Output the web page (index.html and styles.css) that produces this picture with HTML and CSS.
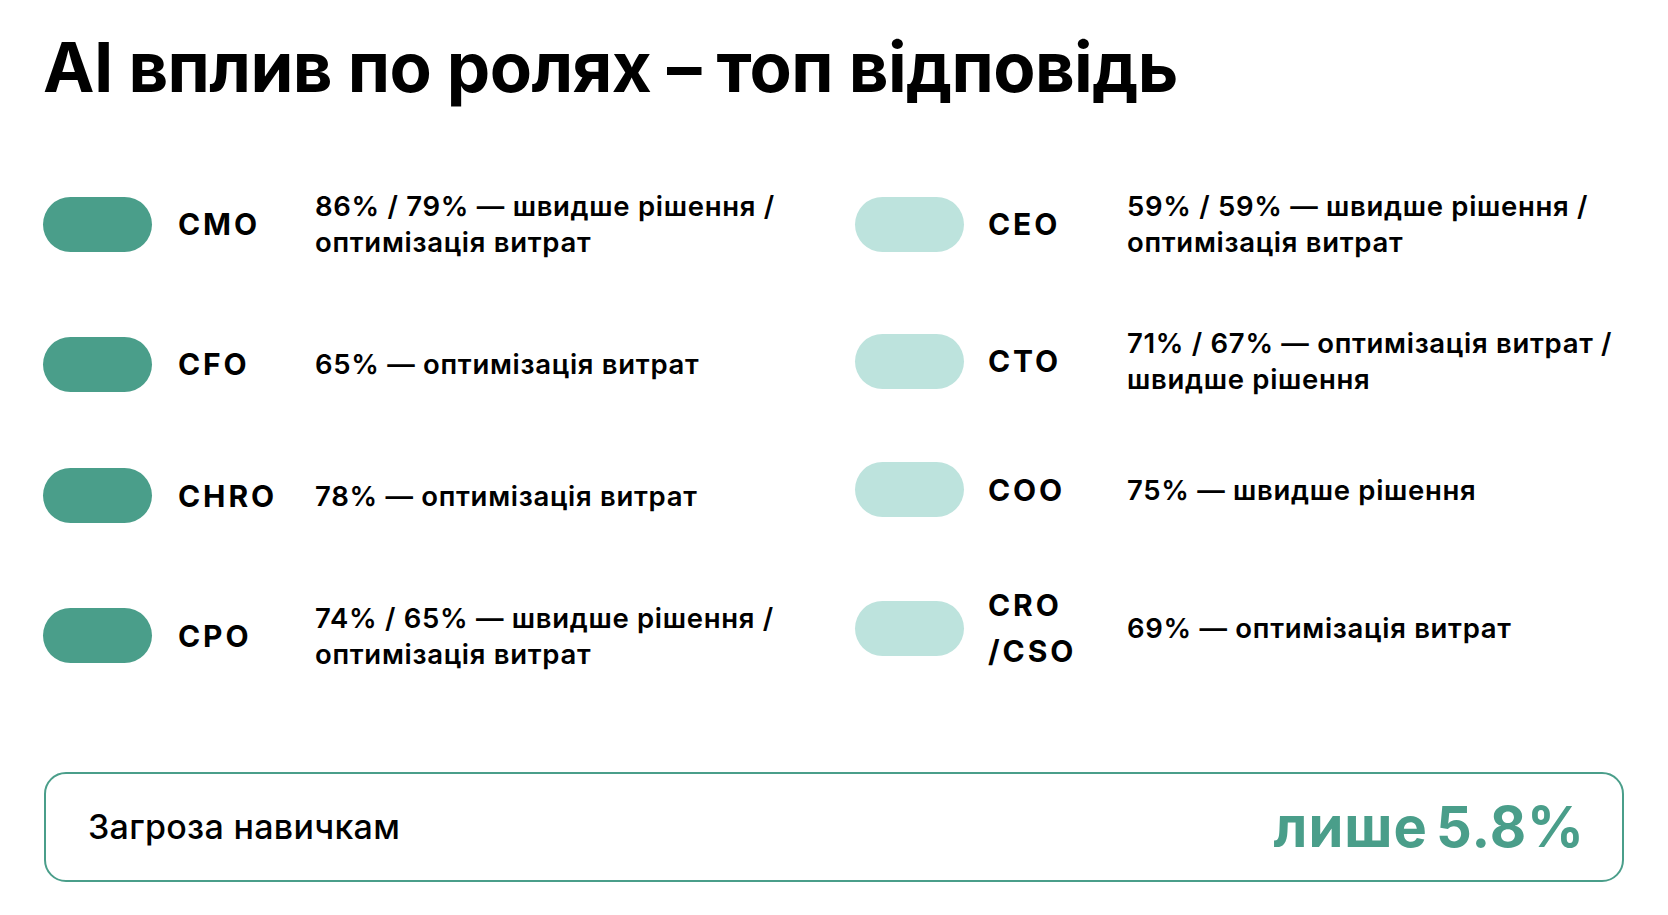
FILE: index.html
```html
<!DOCTYPE html>
<html lang="uk">
<head>
<meta charset="utf-8">
<title>AI вплив по ролях</title>
<link rel="stylesheet" href="styles.css">
</head>
<body>
<main class="page">
  <h1 class="title">AI вплив по ролях – топ відповідь</h1>
  <section class="grid">
    <div class="col col-left">
      <div class="row">
        <span class="pill pill-dark"></span>
        <span class="label">CMO</span>
        <p class="desc">86% / 79% — швидше рішення /<br>оптимізація витрат</p>
      </div>
      <div class="row">
        <span class="pill pill-dark"></span>
        <span class="label">CFO</span>
        <p class="desc">65% — оптимізація витрат</p>
      </div>
      <div class="row">
        <span class="pill pill-dark"></span>
        <span class="label">CHRO</span>
        <p class="desc">78% — оптимізація витрат</p>
      </div>
      <div class="row">
        <span class="pill pill-dark"></span>
        <span class="label">CPO</span>
        <p class="desc">74% / 65% — швидше рішення /<br>оптимізація витрат</p>
      </div>
    </div>
    <div class="col col-right">
      <div class="row">
        <span class="pill pill-light"></span>
        <span class="label">CEO</span>
        <p class="desc">59% / 59% — швидше рішення /<br>оптимізація витрат</p>
      </div>
      <div class="row">
        <span class="pill pill-light"></span>
        <span class="label">CTO</span>
        <p class="desc">71% / 67% — оптимізація витрат /<br>швидше рішення</p>
      </div>
      <div class="row">
        <span class="pill pill-light"></span>
        <span class="label">COO</span>
        <p class="desc">75% — швидше рішення</p>
      </div>
      <div class="row">
        <span class="pill pill-light"></span>
        <span class="label label-tall">CRO<br>/CSO</span>
        <p class="desc">69% — оптимізація витрат</p>
      </div>
    </div>
  </section>
  <section class="threat">
    <span class="threat-label">Загроза навичкам</span>
    <span class="threat-value">лише 5.8%</span>
  </section>
</main>
</body>
</html>
```

FILE: styles.css
```css
* { box-sizing: border-box; }

html, body {
  margin: 0;
  padding: 0;
  background: #ffffff;
}

body {
  font-family: Inter, "Noto Sans", "DejaVu Sans", sans-serif;
  color: #000000;
  width: 1668px;
  height: 915px;
  overflow: hidden;
}

.page {
  padding: 33px 44px 0 43px;
}

.title {
  margin: 0;
  font-size: 69px;
  line-height: 69px;
  font-weight: 700;
  letter-spacing: -0.6px;
  white-space: nowrap;
}

.grid {
  display: grid;
  grid-template-columns: 812px 1fr;
  margin-top: 86px;
  align-items: start;
}

.col {
  display: flex;
  flex-direction: column;
}

.col-left { gap: 76.5px; }
.col-right { gap: 65px; }

.row {
  display: flex;
  align-items: center;
  min-height: 55px;
}

.pill {
  flex: 0 0 109px;
  height: 55px;
  border-radius: 28px;
  margin-right: 26px;
}

.pill-dark { background: #4a9e8a; }
.pill-light { background: #bde3dd; }

.col-right .pill { margin-right: 24px; }

.label {
  flex: 0 0 137px;
  font-size: 30px;
  line-height: 36px;
  font-weight: 700;
  letter-spacing: 2.9px;
}

.label-tall { line-height: 46px; }

.col-right .label { flex-basis: 139px; }

.desc {
  margin: 0;
  font-size: 27.5px;
  line-height: 36px;
  font-weight: 600;
  letter-spacing: 0.7px;
  white-space: nowrap;
}

.threat {
  display: flex;
  align-items: center;
  justify-content: space-between;
  margin: 98px 0 0 1px;
  height: 110px;
  border: 2px solid #4a9e8a;
  border-radius: 22px;
  padding: 0 37px 0 42px;
}

.threat-label {
  font-size: 34px;
  font-weight: 500;
  line-height: 40px;
  letter-spacing: 0.3px;
}

.threat-value {
  font-size: 56px;
  font-weight: 700;
  line-height: 60px;
  color: #4a9e8a;
  letter-spacing: 1px;
  word-spacing: -6px;
}
```
